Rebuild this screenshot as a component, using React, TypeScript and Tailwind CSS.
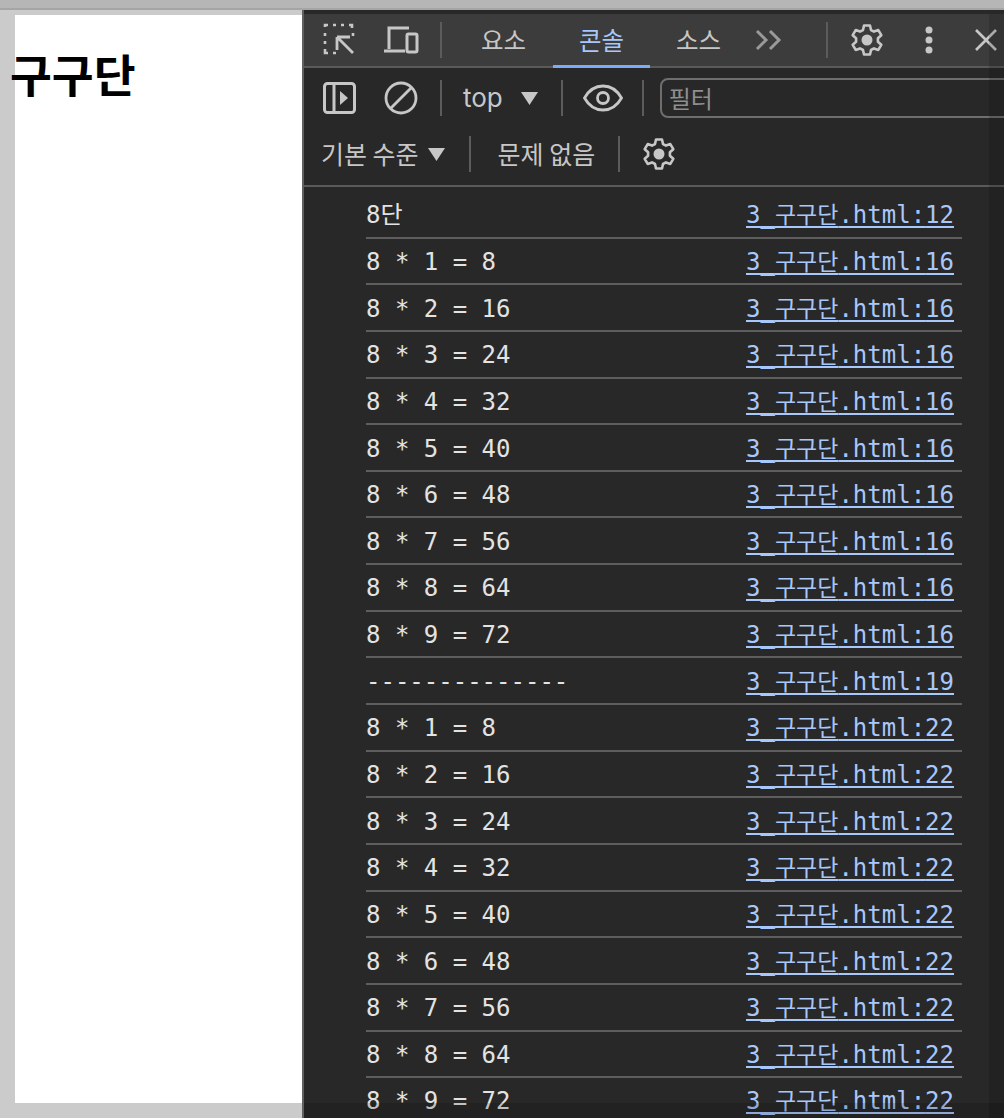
const mono = "font-['DejaVu_Sans_Mono','Noto_Sans_CJK_KR',monospace]";

const rows: [string, number][] = [
  ["8단", 12],
  ["8 * 1 = 8", 16],
  ["8 * 2 = 16", 16],
  ["8 * 3 = 24", 16],
  ["8 * 4 = 32", 16],
  ["8 * 5 = 40", 16],
  ["8 * 6 = 48", 16],
  ["8 * 7 = 56", 16],
  ["8 * 8 = 64", 16],
  ["8 * 9 = 72", 16],
  ["--------------", 19],
  ["8 * 1 = 8", 22],
  ["8 * 2 = 16", 22],
  ["8 * 3 = 24", 22],
  ["8 * 4 = 32", 22],
  ["8 * 5 = 40", 22],
  ["8 * 6 = 48", 22],
  ["8 * 7 = 56", 22],
  ["8 * 8 = 64", 22],
  ["8 * 9 = 72", 22],
];

function Sep({ className = "" }: { className?: string }) {
  return <div className={"w-[2px] h-[36px] bg-[#5c5c5c] shrink-0 " + className} />;
}

function Gear({ size = 34 }: { size?: number }) {
  return (
    <svg width={size} height={size} viewBox="0 0 34 34" fill="none" className="shrink-0">
      <path
        d="M14 2.500h6l1 4.500 3 1.600 4.300-1.500 3 5.100-3.400 3.100v3.400l3.400 3.100-3 5.100-4.300-1.500-3 1.600-1 4.500h-6l-1-4.500-3-1.600-4.300 1.500-3-5.100 3.400-3.100v-3.400l-3.400-3.100 3-5.100 4.300 1.500 3-1.600z"
        stroke="#c7c7c7"
        strokeWidth="2.600"
        strokeLinejoin="round"
      />
      <circle cx="17" cy="17" r="5.500" fill="#c7c7c7" />
    </svg>
  );
}

function Tri() {
  return (
    <svg width="17" height="13" viewBox="0 0 17 13" className="shrink-0">
      <path d="M0 0h17l-8.500 13z" fill="#c7c7c7" />
    </svg>
  );
}

function ConsoleRow({ text, line }: { text: string; line: number }) {
  return (
    <div className={"flex h-[46.65px] shrink-0 items-center justify-between border-b-2 border-[#5e5e5e] pt-[2px] pr-[8px] text-[24px] text-[#e3e3e3] " + mono}>
      <span className="whitespace-pre">{text}</span>
      <span className="whitespace-pre text-[#a8c7fa] underline underline-offset-[3px]">
        3_<span className="text-[23px]">구구단</span>.html:{line}
      </span>
    </div>
  );
}

export default function App() {
  return (
    <div className="relative flex h-[1118px] w-[1004px] flex-col overflow-hidden bg-[#cbcbcb] font-['Noto_Sans_CJK_KR','Noto_Sans',sans-serif]">
      <div className="h-[8px] shrink-0 bg-[#b6b6b6]" />
      <div className="h-[2px] shrink-0 bg-[#a5a5a5]" />
      <div className="flex min-h-0 flex-1">
        <div className="w-[302px] shrink-0 pl-[15px] pt-[5px]">
          <div className="h-[1088px] w-[287px] bg-white">
            <h1 className="-ml-[5px] pt-[30px] text-[45.5px] leading-[56px] font-bold text-black">구구단</h1>
          </div>
        </div>
        <div className="relative flex min-w-0 flex-1 flex-col overflow-hidden border-l-2 border-[#606060] bg-[#282828]">
          <div className="h-[4px] shrink-0 bg-[#282828]" />
          {/* Tab bar */}
          <div className="flex h-[54px] shrink-0 items-center border-b-2 border-[#5a5a5a] bg-[#3c3c3c] pl-[19px] text-[24.5px] text-[#c7c7c7]">
            <svg width="34" height="34" viewBox="0 0 34 34" fill="none" className="shrink-0">
              <path d="M2 4V2h3M10 2h3M18 2h3M26 2h3v3M30 10v3M2 10v3M2 18v3M2 26v4h3M10 30h3" stroke="#c7c7c7" strokeWidth="2.600" />
              <path d="M14 14h13M14 14v13M14 14l16 16" stroke="#c7c7c7" strokeWidth="2.800" />
            </svg>
            <svg width="36" height="30" viewBox="0 0 36 30" fill="none" className="ml-[26px] shrink-0">
              <path d="M6 24V3h20M1 26h21" stroke="#c7c7c7" strokeWidth="3" />
              <rect x="24" y="9" width="10" height="18" rx="1.500" stroke="#c7c7c7" strokeWidth="3" />
            </svg>
            <Sep className="ml-[21px]" />
            <span className="w-[111px] pl-[12px] text-center">요소</span>
            <div className="relative flex h-full w-[97px] items-center justify-center text-[#a8c7fa]">
              콘솔
              <div className="absolute right-0 -bottom-[2px] left-0 h-[3px] bg-[#7cacf8]" />
            </div>
            <span className="w-[97px] text-center">소스</span>
            <svg width="27" height="24" viewBox="0 0 27 24" fill="none" className="ml-[8px] shrink-0">
              <path d="M2 3l9 9-9 9M15 3l9 9-9 9" stroke="#9a9a9a" strokeWidth="3" />
            </svg>
            <Sep className="ml-[44px]" />
            <div className="ml-[22px]"><Gear /></div>
            <svg width="10" height="30" viewBox="0 0 10 30" className="ml-[40px] shrink-0">
              <circle cx="5" cy="5" r="3.500" fill="#c7c7c7" />
              <circle cx="5" cy="15" r="3.500" fill="#c7c7c7" />
              <circle cx="5" cy="25" r="3.500" fill="#c7c7c7" />
            </svg>
            <svg width="24" height="24" viewBox="0 0 24 24" fill="none" className="ml-[40px] shrink-0">
              <path d="M2 2l20 20M22 2L2 22" stroke="#c7c7c7" strokeWidth="2.600" />
            </svg>
          </div>
          {/* Filter row */}
          <div className="flex h-[60px] shrink-0 items-center pl-[19px] text-[#c7c7c7]">
            <svg width="33" height="32" viewBox="0 0 33 32" fill="none" className="shrink-0">
              <rect x="1.500" y="1.500" width="30" height="29" rx="3" stroke="#c7c7c7" strokeWidth="3" />
              <path d="M11 2v28" stroke="#c7c7c7" strokeWidth="3" />
              <path d="M17 9l8 7-8 7z" fill="#c7c7c7" />
            </svg>
            <svg width="34" height="34" viewBox="0 0 34 34" fill="none" className="ml-[28px] shrink-0">
              <circle cx="17" cy="17" r="15" stroke="#c7c7c7" strokeWidth="2.800" />
              <path d="M7 27L27 7" stroke="#c7c7c7" strokeWidth="2.800" />
            </svg>
            <Sep className="ml-[22px]" />
            <span className="ml-[21px] font-['Inter',sans-serif] text-[26px] leading-none">top</span>
            <div className="ml-[18px]"><Tri /></div>
            <Sep className="ml-[23px]" />
            <svg width="40" height="28" viewBox="0 0 40 28" fill="none" className="ml-[20px] shrink-0">
              <path d="M1.500 14C6 6 12.500 2 20 2s14 4 18.500 12C34 22 27.500 26 20 26S6 22 1.500 14z" stroke="#c7c7c7" strokeWidth="2.800" />
              <circle cx="20" cy="14" r="5.500" stroke="#c7c7c7" strokeWidth="2.800" />
            </svg>
            <Sep className="ml-[19px]" />
            <div className="ml-[16px] flex h-[40px] w-[400px] shrink-0 items-center rounded-[8px] border-2 border-[#6e6e6e] pl-[7px] text-[24px] text-[#8f8f8f]">
              필터
            </div>
          </div>
          {/* Level row */}
          <div className="flex h-[59px] shrink-0 items-center border-b-2 border-[#5a5a5a] pb-[5px] pl-[17px] text-[25px] text-[#c7c7c7]">
            <span className="whitespace-pre">기본 수준</span>
            <div className="ml-[9px]"><Tri /></div>
            <Sep className="ml-[24px]" />
            <span className="ml-[27px] whitespace-pre">문제 없음</span>
            <Sep className="ml-[23px]" />
            <div className="ml-[22px]"><Gear /></div>
          </div>
          {/* Console */}
          <div className="ml-[62px] mr-[40px] w-[596px] flex flex-col pt-[5px]">
            {rows.map((r, i) => (
              <ConsoleRow key={i} text={r[0]} line={r[1]} />
            ))}
          </div>
          {/* Dimmed edges */}
          <div className="absolute top-[4px] right-0 bottom-0 w-[15px] bg-black/15" />
          <div className="absolute right-0 bottom-0 left-0 h-[15px] bg-black/15" />
        </div>
      </div>
    </div>
  );
}
